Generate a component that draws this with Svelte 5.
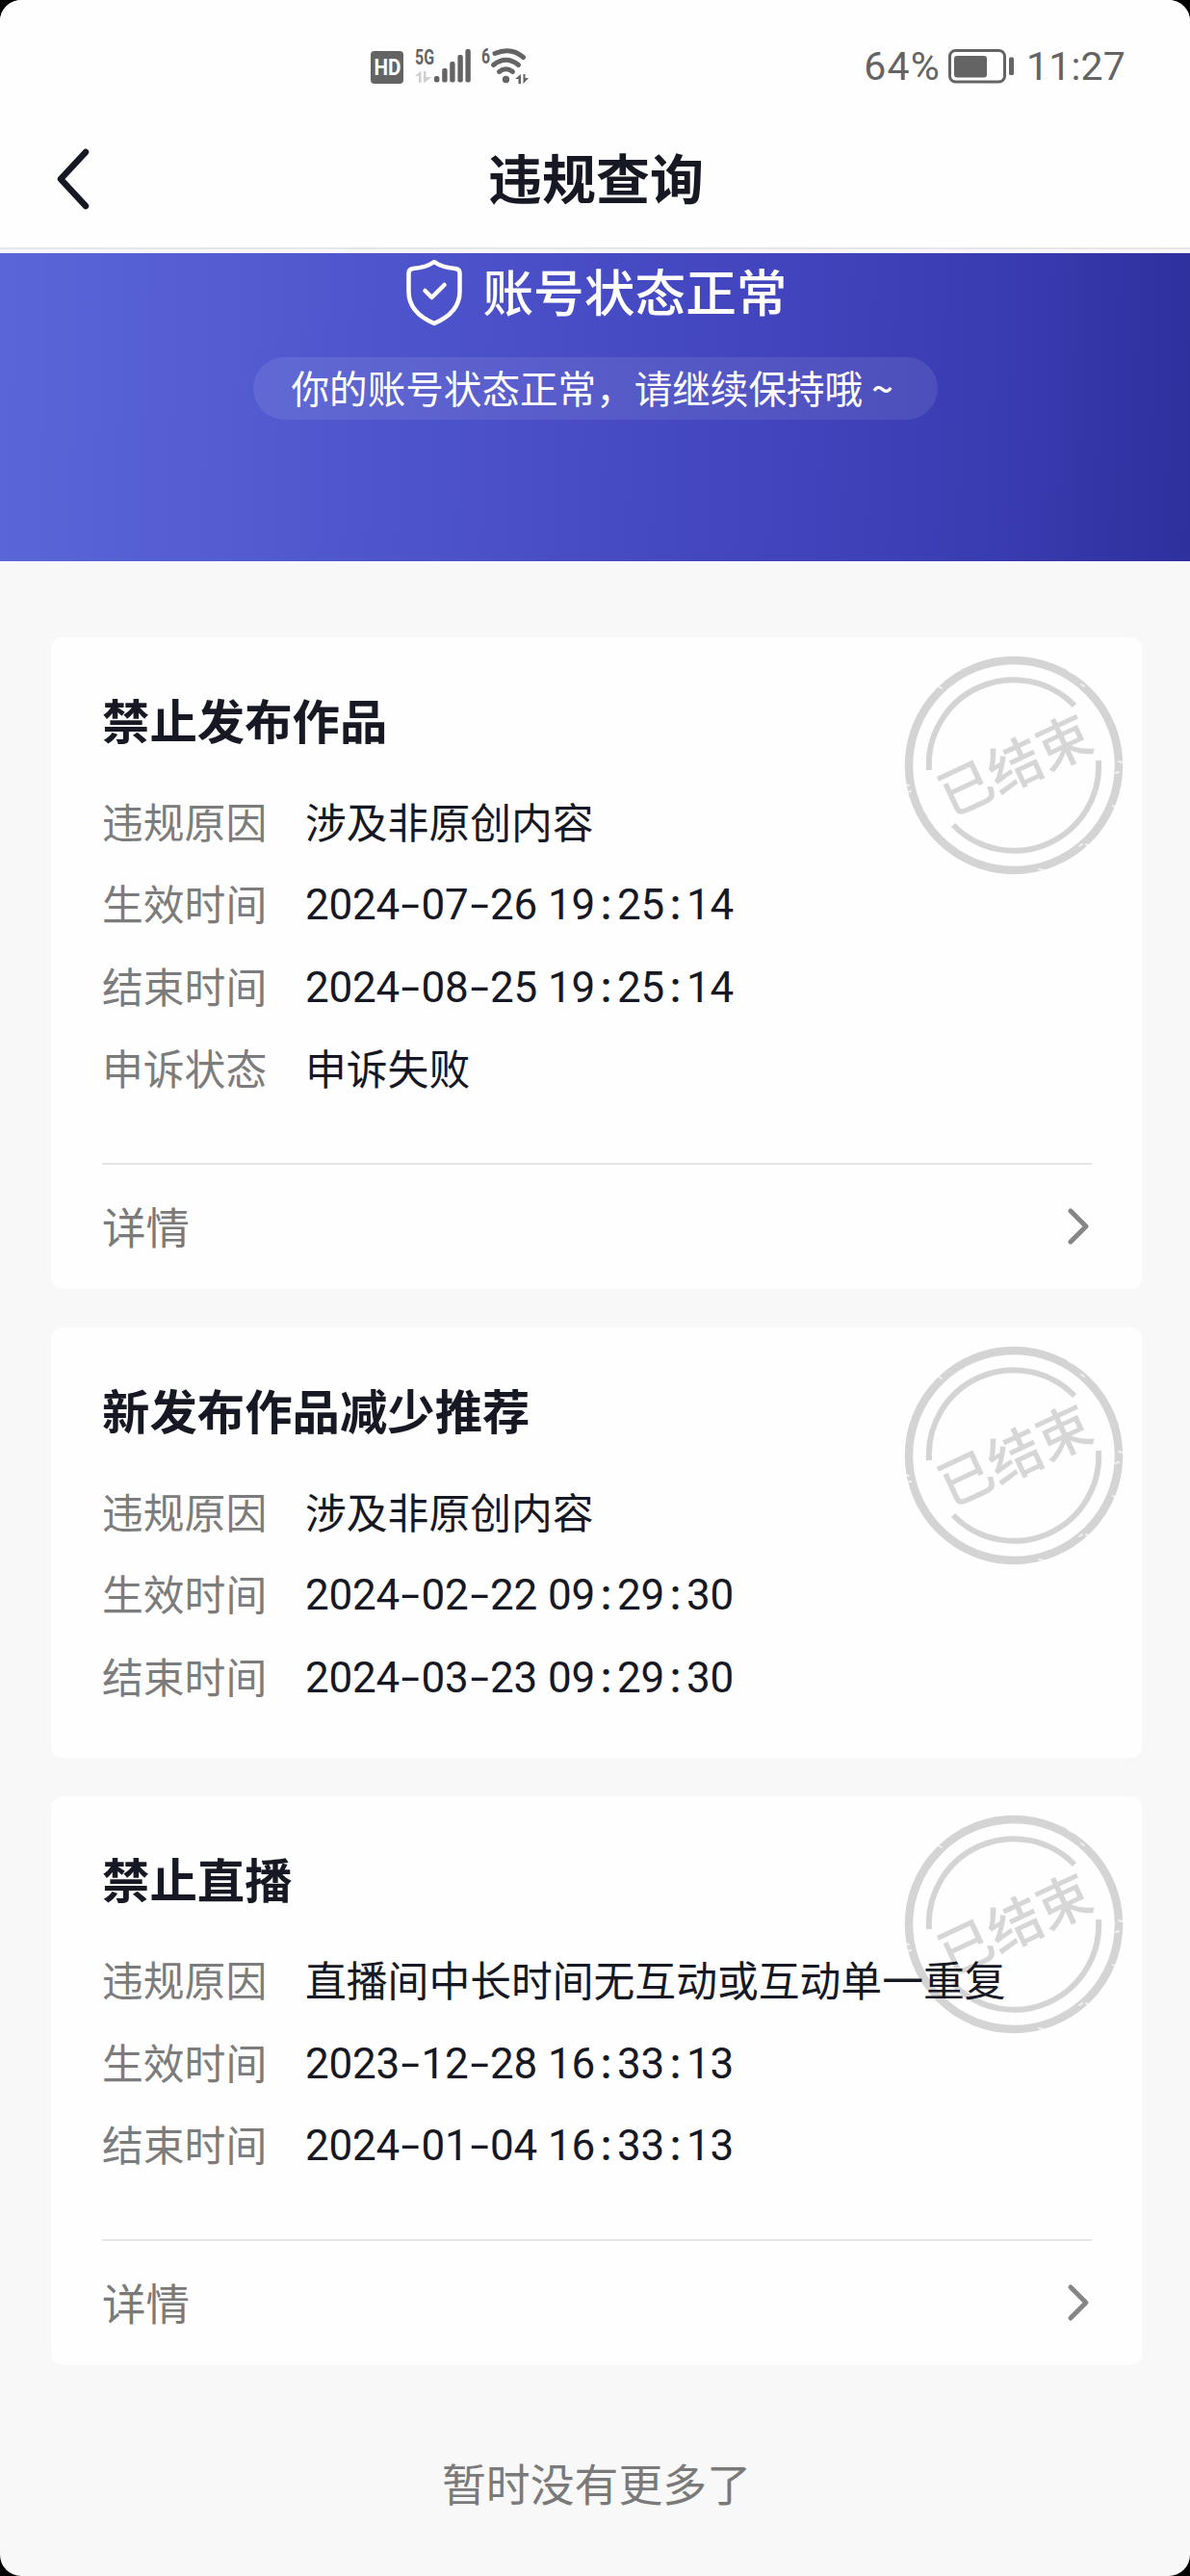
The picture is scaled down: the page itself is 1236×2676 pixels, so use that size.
<script lang="ts">
	interface Row {
		label: string;
		value: string;
		numeric?: boolean;
	}

	interface Violation {
		title: string;
		rows: Row[];
		detail: boolean;
	}

	const violations: Violation[] = [
		{
			title: '禁止发布作品',
			rows: [
				{ label: '违规原因', value: '涉及非原创内容' },
				{ label: '生效时间', value: '2024-07-26 19:25:14', numeric: true },
				{ label: '结束时间', value: '2024-08-25 19:25:14', numeric: true },
				{ label: '申诉状态', value: '申诉失败' }
			],
			detail: true
		},
		{
			title: '新发布作品减少推荐',
			rows: [
				{ label: '违规原因', value: '涉及非原创内容' },
				{ label: '生效时间', value: '2024-02-22 09:29:30', numeric: true },
				{ label: '结束时间', value: '2024-03-23 09:29:30', numeric: true }
			],
			detail: false
		},
		{
			title: '禁止直播',
			rows: [
				{ label: '违规原因', value: '直播间中长时间无互动或互动单一重复' },
				{ label: '生效时间', value: '2023-12-28 16:33:13', numeric: true },
				{ label: '结束时间', value: '2024-01-04 16:33:13', numeric: true }
			],
			detail: true
		}
	];

	function kind(char: string) {
		if (char === '-') return 'dash';
		if (char === ':') return 'colon';
		if (char === ' ') return 'space';
		return 'digit';
	}
</script>

<div class="screen">
	<div class="status">
		<svg class="signals" width="170" height="48" viewBox="0 0 170 48">
			<rect x="0" y="8" width="34" height="34" rx="4" fill="#646464" />
			<text class="hd" x="3.5" y="33" textLength="28" lengthAdjust="spacingAndGlyphs">HD</text>
			<text class="small" x="46" y="21.5" textLength="20" lengthAdjust="spacingAndGlyphs">5G</text>
			<g fill="#d0d0d0">
				<path d="M46 34 L52.5 28.5 V41 H50 V34 Z" />
				<path d="M55 29 H57.5 V35 H63.5 L55 41.5 Z" />
			</g>
			<g fill="#646464">
				<rect x="66" y="34" width="5.4" height="6.5" rx="2" />
				<rect x="74.2" y="26" width="5.4" height="14.5" rx="2" />
				<rect x="82.2" y="19" width="5.4" height="21.5" rx="2" />
				<rect x="90.4" y="12" width="5.4" height="28.5" rx="2" />
				<rect x="98.4" y="6" width="5.4" height="34.5" rx="2" />
			</g>
			<text class="small" x="115" y="20.5" textLength="9" lengthAdjust="spacingAndGlyphs">6</text>
			<g fill="none" stroke="#646464" stroke-width="5" stroke-linecap="round">
				<path d="M129 10.5 Q146 3.5 158.5 14.5" />
				<path d="M127.5 22.5 Q140.5 12 153.5 22.5" />
				<path d="M133.5 29.5 Q140.5 24 147.5 29.5" />
			</g>
			<circle cx="140.5" cy="37.5" r="3.7" fill="#646464" />
			<g fill="#646464">
				<path d="M150 37 L156 32 V42 H153.5 V37 Z" />
				<path d="M158.5 32 H160.5 V36 H164 L158.5 42 Z" />
			</g>
		</svg>
		<div class="power">
			<span class="percent">64%</span>
			<svg width="70" height="36" viewBox="0 0 70 36">
				<rect x="1.5" y="1.5" width="57" height="32.5" rx="6" fill="none" stroke="#646464" stroke-width="3" />
				<rect x="6" y="7" width="34" height="22.5" rx="3" fill="#646464" />
				<rect x="63" y="8.5" width="5" height="18.5" rx="1.5" fill="#646464" />
			</svg>
			<span class="clock">11:27</span>
		</div>
	</div>

	<header>
		<svg class="back" width="40" height="68" viewBox="0 0 40 68">
			<path d="M33 6 L7 34 L33 62" />
		</svg>
		<h1>违规查询</h1>
	</header>

	<section class="banner">
		<div class="state">
			<svg width="60" height="70" viewBox="0 0 58 70">
				<path d="M29 3 C36 8 44 9.5 51 10 Q55.5 10.5 55.5 15 V34 C55.5 51 43 61 29 67 C15 61 2.5 51 2.5 34 V15 Q2.5 10.5 7 10 C14 9.5 22 8 29 3 Z" />
				<path d="M19.5 33 L26.5 40 L39.5 27" />
			</svg>
			<h2>账号状态正常</h2>
		</div>
		<p class="tip">你的账号状态正常，请继续保持哦<span>~</span></p>
	</section>

	<main>
		{#each violations as v}
			<article>
				<svg class="stamp" width="230" height="230" viewBox="-115 -115 230 230">
					<circle r="109" stroke-width="8.5" />
					<path stroke-width="6" d="M-88 5 A88 88 0 0 1 63 -62" />
					<path stroke-width="6" d="M88 -5 A88 88 0 0 1 -63 62" />
					<!-- worn spots in the ink -->
					<path
						class="nicks"
						d="M-78 -82 l3 2 M57 -98 l6 3 M70 -84 l3 2 M-113 20 l4 1 M-111 28 l4 -1 M109 -4 l4 1 M106 8 l3 -1 M103 42 l4 2 M75 82 l4 2 M68 84 l3 -2 M26 108 l5 1"
					/>
					<text transform="rotate(-25)" x="1" y="21" text-anchor="middle">已结束</text>
				</svg>
				<h3>{v.title}</h3>
				<dl>
					{#each v.rows as row}
						<div class="row">
							<dt>{row.label}</dt>
							{#if row.numeric}
								<dd class="numeric">{#each row.value as char}<span class={kind(char)}>{char}</span>{/each}</dd>
							{:else}
								<dd>{row.value}</dd>
							{/if}
						</div>
					{/each}
				</dl>
				{#if v.detail}
					<div class="detail">
						<span>详情</span>
						<svg width="26" height="42" viewBox="0 0 26 42">
							<path d="M4 5 L20 21 L4 37" />
						</svg>
					</div>
				{/if}
			</article>
		{/each}
		<p class="end">暂时没有更多了</p>
	</main>
</div>

<style>
	:global(body) {
		margin: 0;
		background: #000;
	}

	h1,
	h2,
	h3,
	p,
	dl,
	dd {
		margin: 0;
	}

	.screen {
		width: 1236px;
		height: 2676px;
		overflow: hidden;
		border-radius: 22px;
		background: #f8f8f8;
		color: #161823;
		font-family: 'Noto Sans CJK SC', sans-serif;
		display: flex;
		flex-direction: column;
	}

	.status {
		height: 118px;
		box-sizing: border-box;
		padding: 20px 67px 0 385px;
		background: #fefefe;
		display: flex;
		justify-content: space-between;
		align-items: center;
		color: #646464;
		font-family: Roboto, sans-serif;
	}

	.hd {
		font: bold 23px Roboto, sans-serif;
		fill: #fefefe;
	}

	.small {
		font: bold 22px Roboto, sans-serif;
		fill: #646464;
	}

	.power {
		display: flex;
		align-items: center;
		font-size: 41px;
	}

	.percent {
		letter-spacing: 1.2px;
	}

	.clock {
		letter-spacing: 0.2px;
	}

	.power svg {
		margin: 0 11px 0 8px;
	}

	header {
		height: 139px;
		background: #fefefe;
		border-bottom: 2px solid #e6e6e6;
		display: grid;
		grid-template-columns: 1fr auto 1fr;
		align-items: center;
	}

	.back {
		margin: 0 0 3px 56px;
	}

	.back path {
		fill: none;
		stroke: #161823;
		stroke-width: 6.5;
		stroke-linecap: round;
		stroke-linejoin: round;
	}

	h1 {
		margin: 0 -2px 9px 0;
		font-size: 56px;
		line-height: 80px;
		font-weight: 700;
	}

	.banner {
		height: 320px;
		margin-top: 4px;
		background: linear-gradient(92deg, #5a66d8 0%, #4c52ca 38%, #4144bc 66%, #393bb0 84%, #2e309e 100%);
		color: #fff;
		display: flex;
		flex-direction: column;
		align-items: center;
	}

	.state {
		display: flex;
		align-items: center;
		gap: 20px;
		height: 82px;
		padding-left: 3px;
	}

	.state svg path {
		fill: none;
		stroke: #fff;
		stroke-width: 4.5;
		stroke-linecap: round;
		stroke-linejoin: round;
	}

	h2 {
		margin-bottom: 6px;
		font-size: 52.7px;
		line-height: 70px;
		font-weight: 500;
	}

	.tip {
		width: 711px;
		height: 65px;
		box-sizing: border-box;
		margin-top: 26px;
		padding-left: 40px;
		border-radius: 33px;
		background: rgba(255, 255, 255, 0.09);
		font-size: 39.6px;
		line-height: 61px;
		white-space: nowrap;
	}

	.tip span {
		margin-left: 9px;
		font-weight: 500;
	}

	main {
		padding: 79px 50px 0 53px;
		display: flex;
		flex-direction: column;
		gap: 40px;
	}

	article {
		position: relative;
		background: #fefefe;
		border-radius: 12px;
		padding: 51px 52px 0 53px;
	}

	.stamp {
		position: absolute;
		top: 18px;
		right: 18px;
	}

	.stamp circle,
	.stamp path {
		fill: none;
		stroke: #d4d4d4;
	}

	.stamp .nicks {
		stroke: #fefefe;
		stroke-width: 2;
		stroke-linecap: round;
		opacity: 0.7;
	}

	.stamp text {
		font-size: 56px;
		font-weight: 500;
		fill: #d6d6d6;
	}

	h3 {
		font-size: 49.4px;
		line-height: 68px;
		font-weight: 700;
	}

	/* rows stay above the stamp */
	dl {
		position: relative;
		padding: 28px 0 43px;
	}

	dl:not(:last-child) {
		padding-bottom: 57px;
	}

	.row {
		display: flex;
		height: 85.5px;
		align-items: center;
		font-size: 42.8px;
		line-height: 60px;
		white-space: nowrap;
	}

	dt {
		width: 211px;
		color: #7c7c7c;
	}

	.numeric {
		padding-top: 6px;
		font-family: Roboto, sans-serif;
		font-size: 44px;
	}

	.numeric span {
		display: inline-block;
		text-align: center;
		width: 24.5px;
	}

	.numeric .dash {
		width: 22.5px;
		transform: scaleX(1.6);
	}

	.numeric .colon {
		width: 23px;
		font-weight: 500;
	}

	.numeric .space {
		width: 11px;
	}

	.detail {
		height: 129px;
		border-top: 2px solid #e4e4e4;
		display: flex;
		justify-content: space-between;
		align-items: center;
		color: #7a7a7a;
		font-size: 45.5px;
	}

	.detail span {
		margin-bottom: 4px;
	}

	.detail svg {
		margin-bottom: 2px;
	}

	.detail svg path {
		fill: none;
		stroke: #858585;
		stroke-width: 5;
		stroke-linecap: round;
		stroke-linejoin: round;
	}

	.end {
		margin-top: 48px;
		text-align: center;
		font-size: 45.9px;
		line-height: 66px;
		color: #7a7a7a;
	}
</style>
